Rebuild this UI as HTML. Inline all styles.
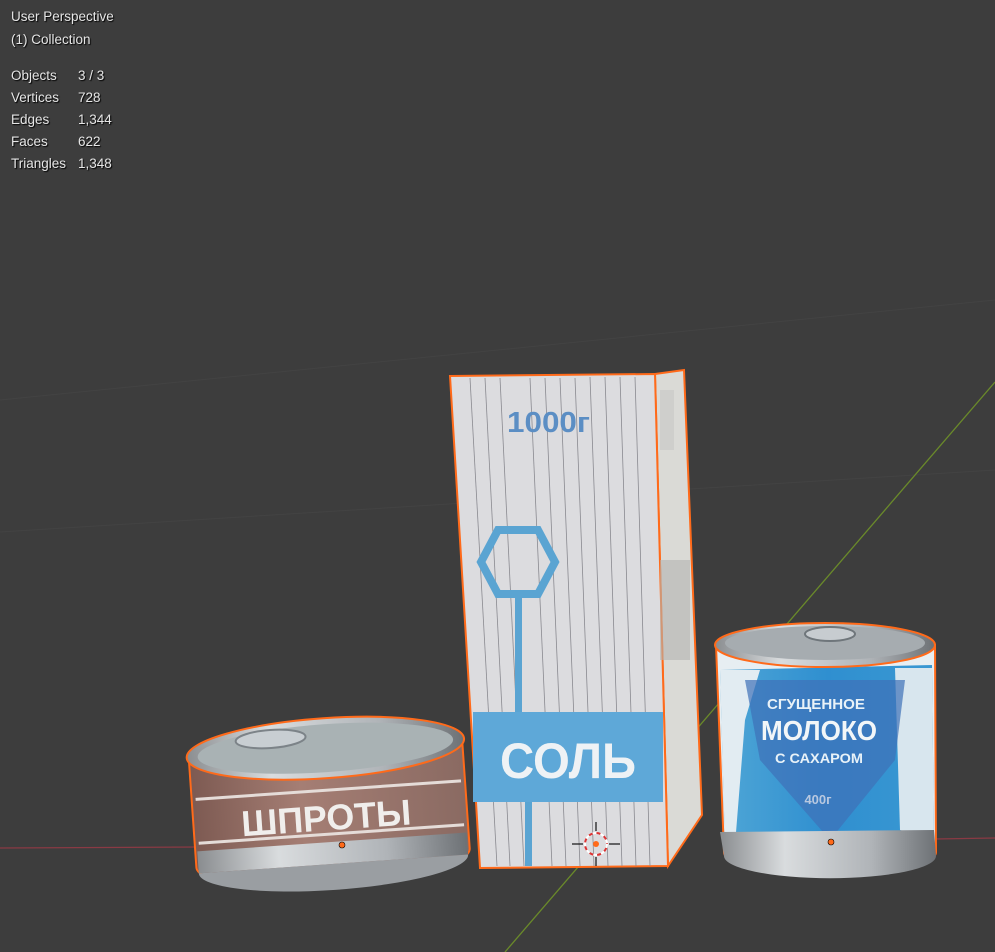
<!DOCTYPE html>
<html><head><meta charset="utf-8"><style>
html,body{margin:0;padding:0;background:#3d3d3d;}
body{width:995px;height:952px;overflow:hidden;position:relative;font-family:"Liberation Sans","DejaVu Sans",sans-serif;}
.t{position:absolute;color:#e6e6e6;font-size:13.5px;text-shadow:1px 1px 1px #000;line-height:22px;}
svg{position:absolute;left:0;top:0;}
</style></head><body>
<svg width="995" height="952" viewBox="0 0 995 952">
<defs>
<linearGradient id="tin" x1="0" x2="1"><stop offset="0" stop-color="#8a8d90"/><stop offset=".3" stop-color="#d9dcde"/><stop offset=".7" stop-color="#b0b4b8"/><stop offset="1" stop-color="#6d7175"/></linearGradient>
<linearGradient id="brown" x1="0" x2="1"><stop offset="0" stop-color="#7d5a52"/><stop offset=".4" stop-color="#a57e74"/><stop offset="1" stop-color="#8a6a62"/></linearGradient>
<linearGradient id="blue" x1="0" x2="1"><stop offset="0" stop-color="#4fa6d6"/><stop offset=".5" stop-color="#2f8fd0"/><stop offset="1" stop-color="#3a98d2"/></linearGradient>
</defs>
<line x1="0" y1="400" x2="995" y2="300" stroke="#434343" stroke-width="1"/>
<line x1="0" y1="532" x2="995" y2="470" stroke="#434343" stroke-width="1"/>
<line x1="0" y1="848" x2="200" y2="847" stroke="#8a3a44" stroke-width="1.2"/>
<line x1="935" y1="839" x2="995" y2="838" stroke="#8a3a44" stroke-width="1.2"/>
<line x1="505" y1="952" x2="995" y2="382" stroke="#6a8a2a" stroke-width="1.3"/>

<polygon points="655,374 684,370 702,815 668,866" fill="#dadad6" stroke="#ff6a1a" stroke-width="2"/>
<polygon points="450,376 655,374 668,866 480,868" fill="#dcdcdf" stroke="#ff6a1a" stroke-width="2"/>
<g stroke="#8a8a90" stroke-width="0.8">
<line x1="470" y1="378" x2="497" y2="866"/><line x1="485" y1="378" x2="510" y2="866"/><line x1="500" y1="378" x2="524" y2="866"/><line x1="530" y1="378" x2="552" y2="866"/><line x1="545" y1="378" x2="566" y2="866"/><line x1="560" y1="378" x2="580" y2="866"/><line x1="575" y1="378" x2="594" y2="866"/><line x1="590" y1="377" x2="608" y2="866"/><line x1="605" y1="377" x2="622" y2="866"/><line x1="620" y1="377" x2="636" y2="866"/><line x1="635" y1="377" x2="650" y2="866"/>
</g>
<text x="507" y="432" textLength="83" lengthAdjust="spacingAndGlyphs" font-family="Liberation Sans,sans-serif" font-weight="bold" font-size="29" fill="#5b8ec4">1000г</text>
<polygon points="498,530 538,530 555,562 538,594 498,594 481,562" fill="none" stroke="#5aa4d2" stroke-width="8"/>
<rect x="515" y="598" width="7" height="115" fill="#5aa4d2"/>
<rect x="473" y="712" width="190" height="90" fill="#5ea8d8"/>
<rect x="525" y="802" width="7" height="64" fill="#5aa4d2"/>
<text x="500" y="778" textLength="136" lengthAdjust="spacingAndGlyphs" font-family="Liberation Sans,sans-serif" font-weight="bold" font-size="50" fill="#eef2f5">СОЛЬ</text>
<rect x="660" y="560" width="30" height="100" fill="#b4b4b0" opacity=".6"/>
<rect x="660" y="390" width="14" height="60" fill="#c8c8c4" opacity=".6"/>

<g transform="rotate(-4 330 800)">
<path d="M192,748 L192,858 A137,28 0 0 0 466,858 L466,748 Z" fill="url(#brown)" stroke="#ff6a1a" stroke-width="2"/>
<rect x="194" y="842" width="270" height="22" fill="url(#tin)"/>
<path d="M194,864 A135,26 0 0 0 464,864" fill="#9a9ea2"/>
<line x1="196" y1="790" x2="462" y2="790" stroke="#e5dcd8" stroke-width="3"/>
<line x1="196" y1="834" x2="462" y2="834" stroke="#e5dcd8" stroke-width="3"/>
<ellipse cx="329" cy="748" rx="139" ry="30" fill="url(#tin)" stroke="#ff6a1a" stroke-width="2"/>
<ellipse cx="329" cy="748" rx="128" ry="24" fill="#a9b2b4"/>
<ellipse cx="275" cy="735" rx="35" ry="9" fill="#c8ced2" stroke="#7c8388" stroke-width="2"/>
<text x="240" y="830" textLength="170" lengthAdjust="spacingAndGlyphs" font-family="Liberation Sans,sans-serif" font-weight="bold" font-size="36" fill="#f0eeec">ШПРОТЫ</text>
</g>
<circle cx="342" cy="845" r="3" fill="#ff6a1a" stroke="#000" stroke-width=".6"/>

<path d="M716,645 L724,852 A104,24 0 0 0 936,852 L935,645 Z" fill="#e7eef2" stroke="#ff6a1a" stroke-width="2"/>
<path d="M720,670 L932,665 L934,840 L725,845 Z" fill="url(#blue)"/>
<polygon points="720,670 760,670 745,720 735,845 725,845" fill="#e2ecf2"/>
<polygon points="895,668 932,668 934,840 900,830" fill="#d8e6ee"/>
<polygon points="745,680 905,680 895,760 830,840 760,760" fill="#3f70b8" opacity=".7"/>
<path d="M720,832 L934,830 L936,856 A105,22 0 0 1 724,856 Z" fill="url(#tin)"/>
<ellipse cx="825" cy="645" rx="110" ry="22" fill="url(#tin)" stroke="#ff6a1a" stroke-width="2"/>
<ellipse cx="825" cy="643" rx="100" ry="17" fill="#a6acb0"/>
<ellipse cx="830" cy="634" rx="25" ry="7" fill="#c7ccd0" stroke="#6f767b" stroke-width="2"/>
<text x="767" y="709" textLength="98" lengthAdjust="spacingAndGlyphs" font-family="Liberation Sans,sans-serif" font-weight="bold" font-size="15" fill="#e8f2f8">СГУЩЕННОЕ</text>
<text x="761" y="740" textLength="116" lengthAdjust="spacingAndGlyphs" font-family="Liberation Sans,sans-serif" font-weight="bold" font-size="28" fill="#f2f6f8">МОЛОКО</text>
<text x="775" y="763" textLength="88" lengthAdjust="spacingAndGlyphs" font-family="Liberation Sans,sans-serif" font-weight="bold" font-size="14" fill="#e8f2f8">С САХАРОМ</text>
<text x="818" y="804" font-family="Liberation Sans,sans-serif" font-weight="bold" font-size="13" fill="#b8c8e0" text-anchor="middle">400г</text>
<circle cx="831" cy="842" r="3" fill="#ff6a1a" stroke="#000" stroke-width=".6"/>

<circle cx="596" cy="844" r="11" fill="none" stroke="#fff" stroke-width="2" stroke-dasharray="4 4"/>
<circle cx="596" cy="844" r="11" fill="none" stroke="#d33" stroke-width="2" stroke-dasharray="4 4" stroke-dashoffset="4"/>
<g stroke="#111" stroke-width="1.2"><line x1="572" y1="844" x2="583" y2="844"/><line x1="609" y1="844" x2="620" y2="844"/><line x1="596" y1="822" x2="596" y2="831"/><line x1="596" y1="857" x2="596" y2="866"/></g>
<circle cx="596" cy="844" r="3" fill="#ff6a1a"/>
</svg>
<div class="t" style="left:11px;top:6px">User Perspective</div>
<div class="t" style="left:11px;top:29px">(1) Collection</div>
<div class="t" style="left:11px;top:65px">Objects<br>Vertices<br>Edges<br>Faces<br>Triangles</div>
<div class="t" style="left:78px;top:65px">3 / 3<br>728<br>1,344<br>622<br>1,348</div>
</body></html>
